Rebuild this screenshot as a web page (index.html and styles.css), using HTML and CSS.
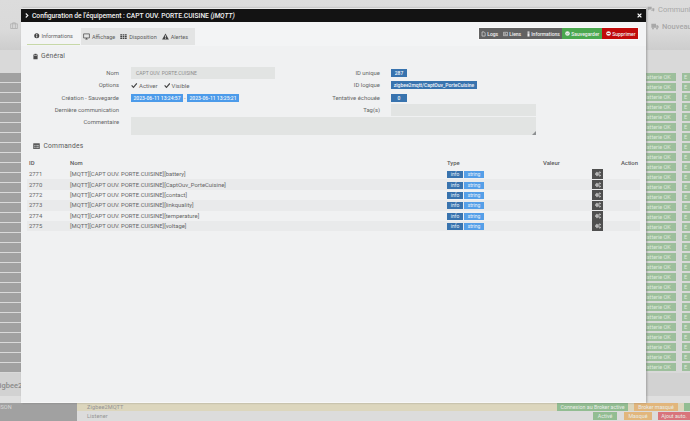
FILE: index.html
```html
<!DOCTYPE html>
<html lang="fr">
<head>
<meta charset="utf-8">
<title>Configuration de l'équipement</title>
<link rel="stylesheet" href="styles.css">
</head>
<body>
<svg class="defs" width="0" height="0" aria-hidden="true">
  <symbol id="i-check" viewBox="0 0 12 12"><path d="M1.2 6.200 4.500 9.800 10.800 2.600" fill="none" stroke="currentColor" stroke-width="2.200"/></symbol>
  <symbol id="i-cogs" viewBox="0 0 12 12"><circle cx="4" cy="6" r="2.300" fill="none" stroke="currentColor" stroke-width="1.800"/><circle cx="4" cy="6" r="3.500" fill="none" stroke="currentColor" stroke-width="1" stroke-dasharray="1.400 1.350"/><circle cx="9.500" cy="3" r="1.400" fill="none" stroke="currentColor" stroke-width="1.300"/><circle cx="9.500" cy="9" r="1.400" fill="none" stroke="currentColor" stroke-width="1.300"/></symbol>
  <symbol id="i-okc" viewBox="0 0 12 12"><circle cx="6" cy="6" r="5.500" fill="currentColor"/><path d="M3.400 6.200 5.300 8 8.700 4.300" fill="none" stroke="#4ba84f" stroke-width="1.500"/></symbol>
  <symbol id="i-minus" viewBox="0 0 12 12"><circle cx="6" cy="6" r="5.500" fill="currentColor"/><rect x="2.800" y="5" width="6.400" height="2" fill="#c10a0a"/></symbol>
</svg>

<div class="page">
  <header class="top">
    <div class="top-left">
      <svg class="top-icon" viewBox="0 0 12 10"><path d="M1 2.500h10v7H1zM4 2.500V1h4v1.500M4 3v6M8 3v6" fill="none" stroke="currentColor" stroke-width="1.100"/></svg>
    </div>
    <div class="top-right">
      <div class="top-link"><svg viewBox="0 0 12 10"><path d="M1 1h6v4H3.500L1.500 6.500V5H1zM8 3h3v4h-.6v1.400L9 7H6V6h2z" fill="currentColor"/></svg>Communi</div>
      <div class="top-link second"><svg viewBox="0 0 12 10"><path d="M0.500 1h7v6h-7zM8 3h2.300l1.200 2v2H8z" fill="currentColor"/><circle cx="3" cy="8" r="1.400" fill="currentColor"/><circle cx="9" cy="8" r="1.400" fill="currentColor"/></svg>Nouveau</div>
    </div>
  </header>
  <div class="band"></div>
  <div class="rows">
    <div class="row"><span class="cell"></span><span class="pill">Batterie OK</span><span class="pill">E</span></div>
    <div class="row"><span class="cell"></span><span class="pill">Batterie OK</span><span class="pill">E</span></div>
    <div class="row"><span class="cell"></span><span class="pill">Batterie OK</span><span class="pill">E</span></div>
    <div class="row"><span class="cell"></span><span class="pill">Batterie OK</span><span class="pill">E</span></div>
    <div class="row"><span class="cell"></span><span class="pill">Batterie OK</span><span class="pill">E</span></div>
    <div class="row"><span class="cell"></span><span class="pill">Batterie OK</span><span class="pill">E</span></div>
    <div class="row"><span class="cell"></span><span class="pill">Batterie OK</span><span class="pill">E</span></div>
    <div class="row"><span class="cell"></span><span class="pill">Batterie OK</span><span class="pill">E</span></div>
    <div class="row"><span class="cell"></span><span class="pill">Batterie OK</span><span class="pill">E</span></div>
    <div class="row"><span class="cell"></span><span class="pill">Batterie OK</span><span class="pill">E</span></div>
    <div class="row"><span class="cell"></span><span class="pill">Batterie OK</span><span class="pill">E</span></div>
    <div class="row"><span class="cell"></span><span class="pill">Batterie OK</span><span class="pill">E</span></div>
    <div class="row"><span class="cell"></span><span class="pill">Batterie OK</span><span class="pill">E</span></div>
    <div class="row"><span class="cell"></span><span class="pill">Batterie OK</span><span class="pill">E</span></div>
    <div class="row"><span class="cell"></span><span class="pill">Batterie OK</span><span class="pill">E</span></div>
    <div class="row"><span class="cell"></span><span class="pill">Batterie OK</span><span class="pill">E</span></div>
    <div class="row"><span class="cell"></span><span class="pill">Batterie OK</span><span class="pill">E</span></div>
    <div class="row"><span class="cell"></span><span class="pill">Batterie OK</span><span class="pill">E</span></div>
    <div class="row"><span class="cell"></span><span class="pill">Batterie OK</span><span class="pill">E</span></div>
    <div class="row"><span class="cell"></span><span class="pill">Batterie OK</span><span class="pill">E</span></div>
    <div class="row"><span class="cell"></span><span class="pill">Batterie OK</span><span class="pill">E</span></div>
    <div class="row"><span class="cell"></span><span class="pill">Batterie OK</span><span class="pill">E</span></div>
    <div class="row"><span class="cell"></span><span class="pill">Batterie OK</span><span class="pill">E</span></div>
    <div class="row"><span class="cell"></span><span class="pill">Batterie OK</span><span class="pill">E</span></div>
    <div class="row"><span class="cell"></span><span class="pill">Batterie OK</span><span class="pill">E</span></div>
    <div class="row"><span class="cell"></span><span class="pill">Batterie OK</span><span class="pill">E</span></div>
    <div class="row"><span class="cell"></span><span class="pill">Batterie OK</span><span class="pill">E</span></div>
    <div class="row"><span class="cell"></span><span class="pill">Batterie OK</span><span class="pill">E</span></div>
    <div class="row"><span class="cell"></span><span class="pill">Batterie OK</span><span class="pill">E</span></div>
    <div class="row"><span class="cell"></span><span class="pill">Batterie OK</span><span class="pill">E</span></div>
  </div>
  <div class="section-title">Zigbee2MQTT</div>
  <div class="bottom-row beige">
    <span class="bcell">LIAISON</span>
    <span class="bname">Zigbee2MQTT</span>
    <span class="bpill green wide">Connexion au Broker active</span>
    <span class="bpill orange mid">Broker masqué</span>
    <span class="bpill green end"></span>
  </div>
  <div class="bottom-row">
    <span class="bcell"></span>
    <span class="bname">Listener</span>
    <span class="bpill green act-p">Activé</span>
    <span class="bpill orange mas">Masqué</span>
    <span class="bpill red add">Ajout auto.</span>
  </div>
</div>

<div class="modal">
  <div class="modal-head">
    <svg class="chev" viewBox="0 0 6 8"><path d="M1 .8 4.400 4 1 7.200" fill="none" stroke="currentColor" stroke-width="1.700"/></svg>
    <span class="modal-title">Configuration de l'équipement : CAPT OUV. PORTE.CUISINE <em>(jMQTT)</em></span>
    <svg class="close" viewBox="0 0 8 8"><path d="M1 1 7 7M7 1 1 7" fill="none" stroke="currentColor" stroke-width="2"/></svg>
  </div>
  <div class="modal-body">
    <div class="tabbar">
      <nav class="tabs">
        <span class="tab active"><svg class="ic" viewBox="0 0 12 12"><circle cx="6" cy="6" r="5.500" fill="currentColor"/><rect x="5" y="2.300" width="2" height="2" fill="#f3f4f5"/><rect x="5" y="5.200" width="2" height="4.500" fill="#f3f4f5"/></svg>Informations</span>
        <div class="tab-group">
          <span class="tab"><svg class="ic" viewBox="0 0 12 12"><path d="M1 1.500h10v7H1z" fill="none" stroke="currentColor" stroke-width="1.200"/><path d="M4 10.500h4M6 8.500v2" stroke="currentColor" stroke-width="1.200"/></svg>Affichage</span>
          <span class="tab"><svg class="ic" viewBox="0 0 12 12"><path d="M0.500 2h3v2.200h-3zM4.500 2h3v2.200h-3zM8.500 2h3v2.200h-3zM0.500 5h3v2.200h-3zM4.500 5h3v2.200h-3zM8.500 5h3v2.200h-3zM0.500 8h3v2.200h-3zM4.500 8h3v2.200h-3zM8.500 8h3v2.200h-3z" fill="currentColor"/></svg>Disposition</span>
          <span class="tab"><svg class="ic" viewBox="0 0 12 12"><path d="M6 .8 11.800 11H.2z" fill="currentColor"/><rect x="5.300" y="4.200" width="1.400" height="3.600" fill="#e3e4e4"/><rect x="5.300" y="8.500" width="1.400" height="1.400" fill="#e3e4e4"/></svg>Alertes</span>
        </div>
      </nav>
      <div class="actions">
        <span class="act"><svg class="ic" viewBox="0 0 12 12"><path d="M2.500 1h5l2.500 2.500V11H2.500z" fill="none" stroke="currentColor" stroke-width="1.400"/></svg>Logs</span>
        <span class="act"><svg class="ic" viewBox="0 0 12 12"><path d="M1 2h10v8H1z" fill="none" stroke="currentColor" stroke-width="1.300"/><path d="M3 5h4M3 7.500h6" stroke="currentColor" stroke-width="1.200"/></svg>Liens</span>
        <span class="act"><svg class="ic narrow" viewBox="0 0 6 12"><path d="M1 1h4v2.500H1zM1 4.500h4V11H1z" fill="currentColor"/></svg>Informations</span>
        <span class="act save"><svg class="ic"><use href="#i-okc"/></svg>Sauvegarder</span>
        <span class="act del"><svg class="ic"><use href="#i-minus"/></svg>Supprimer</span>
      </div>
    </div>

    <section class="general">
      <h2 class="legend"><svg class="ic-l" viewBox="0 0 10 12"><path d="M.8 2h8.400v9.500H.8z" fill="currentColor"/><rect x="3" y=".6" width="4" height="2.400" fill="currentColor"/><rect x="2" y="4" width="6" height="1" fill="#f0f1f2"/></svg>Général</h2>
      <div class="form">
        <div class="col-left">
          <div class="f-row first"><label>Nom</label><div class="input name">CAPT OUV. PORTE.CUISINE</div></div>
          <div class="f-row"><label>Options</label><div class="checks"><span class="check"><svg class="ic-c"><use href="#i-check"/></svg>Activer</span><span class="check"><svg class="ic-c"><use href="#i-check"/></svg>Visible</span></div></div>
          <div class="f-row"><label>Création - Sauvegarde</label><div class="dates"><span class="lbl light">2023-06-11 13:24:57</span><i>-</i><span class="lbl light">2023-06-11 13:25:21</span></div></div>
          <div class="f-row"><label>Dernière communication</label></div>
        </div>
        <div class="col-right">
          <div class="f-row first"><label>ID unique</label><span class="lbl dark num">287</span></div>
          <div class="f-row"><label>ID logique</label><span class="lbl dark">zigbee2mqtt/CaptOuv_PorteCuisine</span></div>
          <div class="f-row"><label>Tentative échouée</label><span class="lbl dark num">0</span></div>
          <div class="f-row"><label>Tag(s)</label><div class="input tags"></div></div>
        </div>
        <div class="f-row comment"><label>Commentaire</label><div class="textarea"><svg class="grip" viewBox="0 0 6 6"><path d="M0 6 6 0v6z" fill="#8d9092"/></svg></div></div>
      </div>
    </section>

    <section class="cmds">
      <h2 class="legend"><svg class="ic-l wide" viewBox="0 0 12 11"><path d="M.5.500h11v10H.5z" fill="currentColor"/><path d="M2 3h8v6H2z" fill="#aeb0b1"/><path d="M5 3v6M2 6h8" stroke="#333" stroke-width=".8"/></svg>Commandes</h2>
      <table class="table">
        <thead><tr><th class="c-id">ID</th><th class="c-name">Nom</th><th class="c-type">Type</th><th class="c-val">Valeur</th><th class="c-act">Action</th></tr></thead>
        <tbody>
          <tr><td>2771</td><td>[MQTT][CAPT OUV. PORTE.CUISINE][battery]</td><td><span class="tag dark">info</span><span class="tag light">string</span></td><td></td><td><span class="cog"><svg class="ic-g"><use href="#i-cogs"/></svg></span></td></tr>
          <tr><td>2770</td><td>[MQTT][CAPT OUV. PORTE.CUISINE][CaptOuv_PorteCuisine]</td><td><span class="tag dark">info</span><span class="tag light">string</span></td><td></td><td><span class="cog"><svg class="ic-g"><use href="#i-cogs"/></svg></span></td></tr>
          <tr><td>2772</td><td>[MQTT][CAPT OUV. PORTE.CUISINE][contact]</td><td><span class="tag dark">info</span><span class="tag light">string</span></td><td></td><td><span class="cog"><svg class="ic-g"><use href="#i-cogs"/></svg></span></td></tr>
          <tr><td>2773</td><td>[MQTT][CAPT OUV. PORTE.CUISINE][linkquality]</td><td><span class="tag dark">info</span><span class="tag light">string</span></td><td></td><td><span class="cog"><svg class="ic-g"><use href="#i-cogs"/></svg></span></td></tr>
          <tr><td>2774</td><td>[MQTT][CAPT OUV. PORTE.CUISINE][temperature]</td><td><span class="tag dark">info</span><span class="tag light">string</span></td><td></td><td><span class="cog"><svg class="ic-g"><use href="#i-cogs"/></svg></span></td></tr>
          <tr><td>2775</td><td>[MQTT][CAPT OUV. PORTE.CUISINE][voltage]</td><td><span class="tag dark">info</span><span class="tag light">string</span></td><td></td><td><span class="cog"><svg class="ic-g"><use href="#i-cogs"/></svg></span></td></tr>
        </tbody>
      </table>
    </section>
  </div>
</div>
</body>
</html>
```
FILE: styles.css
```css
* { box-sizing: border-box; }
html, body { margin: 0; padding: 0; }
body {
  width: 690px; height: 421px; overflow: hidden; position: relative;
  background: #d9d9d9; color: #555;
  font-family: Roboto, "Liberation Sans", sans-serif; font-size: 6px;
}
.defs { position: absolute; }

/* dimmed page behind the dialog */
.page { width: 690px; height: 421px; overflow: hidden; display: flex; flex-direction: column; }
.top { height: 50px; background: linear-gradient(#dcdcdc 0, #dadada 60%, #cdcdcd 100%); display: flex; justify-content: space-between; flex: none; }
.top-left { padding: 22px 0 0 10px; }
.top-icon { width: 8px; height: 7px; color: #aaa; display: block; }
.top-right { width: 43px; padding-top: 4px; color: #a8a8a8; font-size: 7.500px; white-space: nowrap; overflow: hidden; }
.top-link { display: flex; align-items: center; gap: 3px; height: 10px; }
.top-link svg { width: 8px; height: 7px; flex: none; }
.top-link.second { margin-top: 7px; padding-left: 4px; font-weight: 500; }
.band { height: 23px; background: #d9d9d9; flex: none; }
.rows { flex: none; display: flex; flex-direction: column; }
.row { height: 10px; display: flex; flex: none; padding-bottom: 1px; }
.cell { width: 77px; background: #a1a1a1; }
.pill {
  height: 8px; background: #9dbf9c; color: #dde9dc; margin-top: 0;
  font-size: 5.500px; line-height: 8px; text-align: center; white-space: nowrap; overflow: hidden; flex: none;
}
.pill:nth-child(2) { margin-left: 561px; width: 38px; }
.pill:nth-child(3) { margin-left: 6px; width: 8px; text-align: left; padding-left: 2px; }
.section-title {
  flex: none; height: 30px; padding-top: 8px; text-indent: -5px; white-space: nowrap; overflow: hidden;
  font-size: 7.500px; line-height: 10px; color: #8a8a8a; font-weight: 500;
  background: #d2d2d2; border-bottom: 7px solid #dfdfdf;
}
.bottom-row { height: 8px; flex: none; display: flex; align-items: center; background: #dcdcdc; }
.bottom-row.beige { background: #dcd6bd; }
.bottom-row + .bottom-row { height: 10px; }
.bcell { width: 77px; height: 100%; background: #a1a1a1; color: #d8d8d8; font-size: 5.500px; line-height: 8px; text-indent: -9px; flex: none; overflow: hidden; white-space: nowrap; }
.bname { margin-left: 10px; color: #949494; font-size: 5.600px; letter-spacing: .1px; width: 470px; flex: none; }
.bpill { height: 8px; color: #e8ece6; font-size: 5.300px; line-height: 8px; text-align: center; white-space: nowrap; overflow: hidden; flex: none; }
.bpill.green { background: #92bd92; }
.bpill.orange { background: #e2b67c; }
.bpill.red { background: #d9747b; }
.bpill.wide { width: 71px; }
.bpill.mid { width: 44px; margin-left: 6px; }
.bpill.end { width: 6px; margin-left: 6px; }
.bpill.act-p { width: 24px; margin-left: 36px; }
.bpill.mas { width: 28px; margin-left: 7px; }
.bpill.add { width: 32px; margin-left: 6px; }

/* dialog */
.modal {
  position: absolute; left: 21px; top: 8px; width: 625px; height: 395px;
  background: #f0f1f2; display: flex; flex-direction: column;
  border-top: 1px solid #e8e8e8; border-bottom: 1px solid #f7f7f7;
  box-shadow: 1px 0 2px rgba(90,90,90,.45);
}
.modal-head {
  flex: none; height: 13px; background: #131313; color: #f2f2f2; display: flex; align-items: center;
  padding: 0 4px; font-size: 6.700px; font-weight: 500;
}
.chev { width: 4px; height: 5px; margin-right: 3px; flex: none; }
.modal-title { flex: 1; white-space: nowrap; }
.modal-title em { font-style: italic; }
.close { width: 5px; height: 5px; color: #fff; flex: none; }
.modal-body { flex: 1; display: flex; flex-direction: column; }

.tabbar { flex: none; height: 24px; display: flex; justify-content: space-between; padding: 5px 7px 0 6px; background: #f3f4f5; }
.tabs { display: flex; height: 19px; padding-top: 1px; }
.tab { display: flex; align-items: center; gap: 2px; font-size: 5.500px; height: 17px; white-space: nowrap; }
.tab.active { width: 53px; justify-content: center; border-bottom: 1px solid #c7d8a8; color: #666; margin-right: 1px; }
.tab-group { display: flex; background: #e3e4e4; padding: 0 2px; gap: 5px; height: 17px; width: 114px; }
.tab-group .tab { color: #5c5c5c; }
.tab .ic { color: #444; width: 5.500px; height: 5.500px; flex: none; }
.tab-group .tab .ic { width: 7px; height: 7px; }

.actions { display: flex; height: 13px; border: 1px solid #f9f9f9; width: 161px; font-size: 5px; font-weight: 500; color: #f0f0f0; }
.act { display: flex; align-items: center; gap: 1.200px; background: #626262; white-space: nowrap; padding-left: 2px; flex: none; }
.act .ic { width: 5px; height: 6px; flex: none; }
.act .narrow { width: 3px; }
.act:nth-child(1) { width: 22px; }
.act:nth-child(2) { width: 25px; }
.act:nth-child(3) { width: 36px; padding-left: 1px; }
.act.save { background: #4ba84f; width: 40px; padding-left: 3px; }
.act.del { background: #c10a0a; width: 36px; padding-left: 4px; }
.save .ic, .del .ic { width: 5px; height: 5px; }

.legend { display: flex; align-items: center; gap: 3px; margin: 0; font-size: 6.700px; font-weight: 400; color: #5a5a5a; letter-spacing: .2px; }
.general { padding: 4px 0 0 12px; }
.general .legend { height: 12px; }
.ic-l { width: 5px; height: 7px; color: #4a4a4a; flex: none; }
.ic-l.wide { width: 7px; height: 6.500px; }

.form { display: grid; grid-template-columns: 300px 300px; margin: 5px 0 0 -12px; font-size: 5.900px; color: #666; }
.f-row { display: flex; align-items: center; height: 12.500px; }
.f-row.first { height: 13px; margin-top: -1px; }
.f-row label { text-align: right; width: 98px; flex: none; color: #666; white-space: nowrap; margin-right: 12px; }
.col-right .f-row label { width: 59px; margin-right: 11px; }
.input { background: #e2e4e3; height: 12px; display: flex; align-items: center; }
.input.name { width: 144px; padding-left: 5px; font-size: 5px; color: #8c8c8c; }
.input.tags { width: 145px; }
.checks { display: flex; gap: 6px; }
.check { display: flex; align-items: center; gap: 1.500px; font-size: 6px; }
.ic-c { width: 6.500px; height: 6.500px; color: #444; flex: none; }
.dates { display: flex; align-items: center; gap: 1px; }
.dates i { font-style: normal; color: #777; width: 2px; }
.lbl { display: inline-block; height: 8px; line-height: 8px; font-size: 5px; font-weight: 500; color: #f3f7fb; text-align: center; white-space: nowrap; }
.lbl.light { background: #4c9bea; width: 52px; }
.lbl.dark { background: #3873ae; width: 86px; }
.lbl.num { width: 16px; }
.comment { grid-column: 1 / -1; height: 18px; align-items: flex-start; }
.comment label { margin-top: 2px; }
.textarea { width: 405px; height: 18px; background: #e2e4e3; position: relative; }
.grip { position: absolute; right: 0; bottom: 0; width: 4px; height: 4px; }

.cmds { padding: 5.500px 6px 0; }
.cmds .legend { height: 12px; padding-left: 6px; margin-bottom: 6.500px; gap: 3.500px; }
.table { width: 613px; border-collapse: collapse; table-layout: fixed; font-size: 5.900px; color: #666; }
.table th { font-weight: 500; color: #5a5a5a; text-align: left; padding: 0 2px 1px; height: 10.500px; }
.table td { padding: 0 2px; height: 10.400px; line-height: 10px; white-space: nowrap; vertical-align: middle; }
.table tbody tr:nth-child(even) td { background: #e9eaeb; }
.c-id { width: 41px; }
.c-name { width: 377px; }
.c-type { width: 96px; }
.c-val { width: 49px; }
.table th.c-act { text-align: right; }
.tag { display: inline-block; height: 7px; line-height: 7px; font-size: 5px; color: #eaf2fa; text-align: center; vertical-align: middle; }
.tag.dark { background: #3873ae; width: 16px; margin-right: 1px; }
.tag.light { background: #559fe8; width: 20px; }
.cog { display: flex; width: 11px; height: 9.500px; background: #4f4f4f; color: #f1f1f1; align-items: center; justify-content: center; }
.ic-g { width: 6px; height: 6px; }
```
